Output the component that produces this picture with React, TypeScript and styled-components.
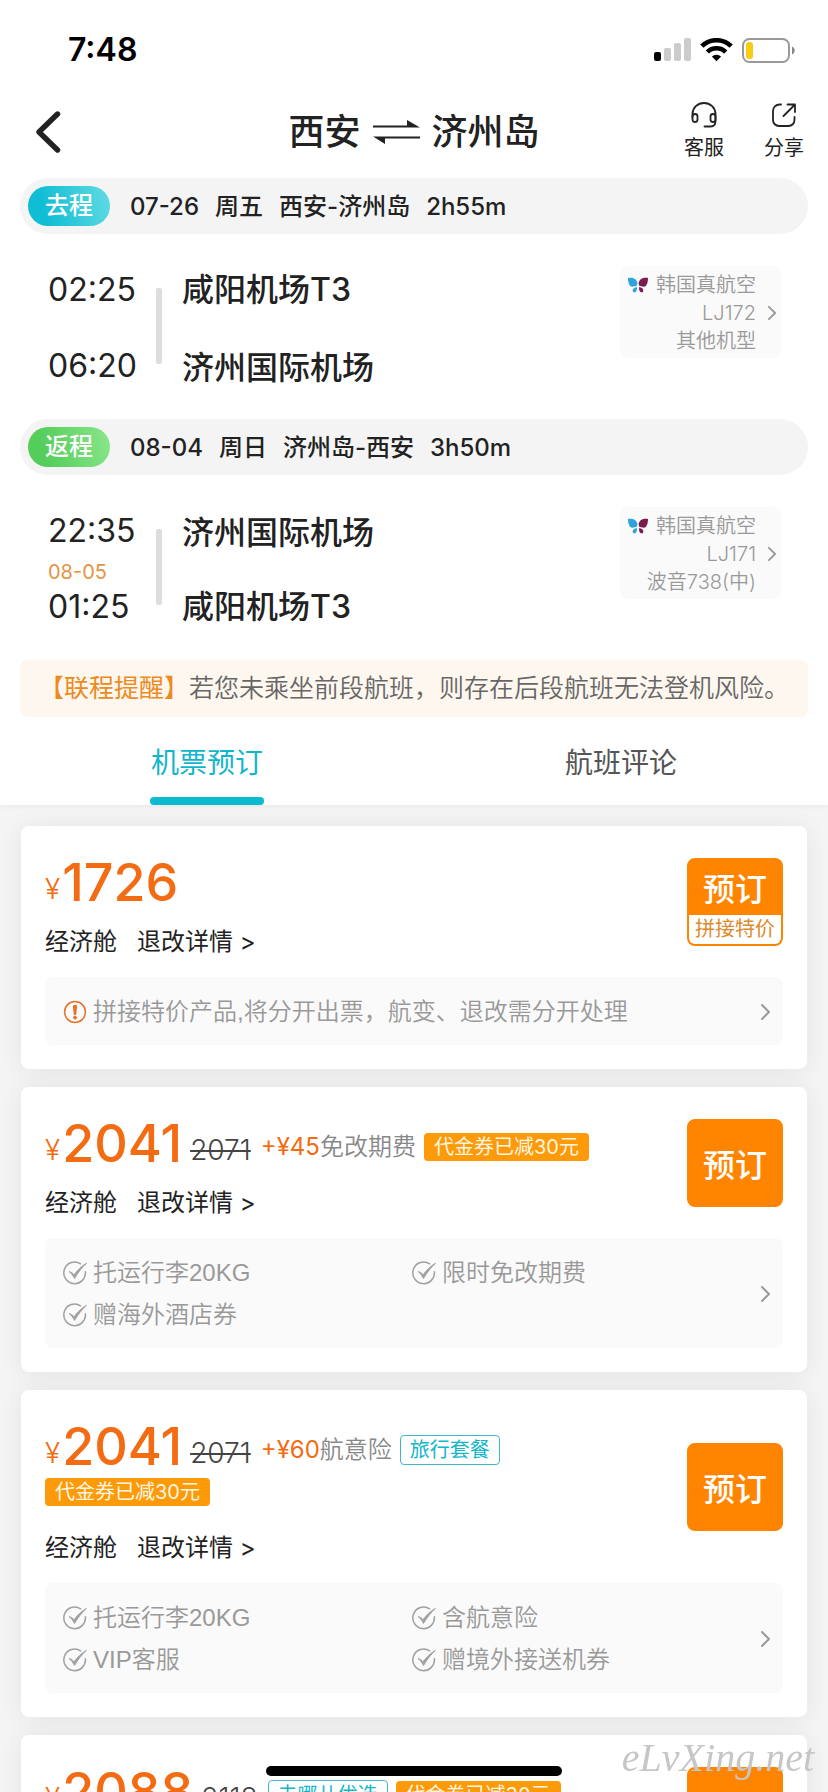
import React from "react";
import styled, { createGlobalStyle } from "styled-components";

const GlobalStyle = createGlobalStyle`
  *, *::before, *::after { box-sizing: border-box; }
  body { margin: 0; background: #f4f4f4; }
  body, button { font-family: Inter, "Noto Sans CJK SC", sans-serif; }
  button { margin: 0; padding: 0; border: 0; background: none; color: inherit; cursor: pointer; }
  a { color: inherit; text-decoration: none; }
  svg { display: block; flex: none; }
`;

const Screen = styled.div`
  height: 100vh;
  overflow: hidden;
  color: #222;
`;

const Top = styled.header`
  background: #fff;
  box-shadow: 0 1px 6px rgba(0, 0, 0, 0.05);
`;

const StatusBar = styled.div`
  display: flex;
  justify-content: space-between;
  align-items: center;
  height: 98px;
  padding: 2px 33px 0 68px;
  color: #000;
`;

const Clock = styled.time`
  font-size: 32px;
  font-weight: 600;
  line-height: 40px;
`;

const StatusIcons = styled.div`
  display: flex;
  align-items: center;
  gap: 9px;
`;

const NavBar = styled.nav`
  display: grid;
  grid-template-columns: 1fr auto 1fr;
  align-items: center;
  height: 68px;
  padding: 0 24px;
`;

const BackButton = styled.button`
  justify-self: start;
  padding-left: 12px;
`;

const Title = styled.h1`
  display: flex;
  align-items: center;
  gap: 12px;
  margin: 0;
  font-size: 36px;
  font-weight: 500;
  line-height: 48px;
`;

const NavActions = styled.div`
  display: flex;
  justify-self: end;
  gap: 40px;
`;

const NavAction = styled.button`
  display: flex;
  flex-direction: column;
  align-items: center;
  gap: 6px;
  font-size: 20px;
  line-height: 28px;
`;

const Itinerary = styled.div`
  padding: 12px 20px 0;
`;

const LegBar = styled.h2`
  display: flex;
  align-items: center;
  gap: 20px;
  height: 56px;
  margin: 0;
  padding: 0 8px;
  border-radius: 28px;
  background: #f4f4f4;
  font-size: 24px;
  font-weight: 500;
  line-height: 32px;
`;

const LegBadge = styled.span<{ $from: string; $to: string }>`
  width: 82px;
  height: 40px;
  border-radius: 20px;
  background: linear-gradient(75deg, ${(p) => p.$from} 20%, ${(p) => p.$to});
  color: #fff;
  line-height: 40px;
  text-align: center;
`;

const LegFacts = styled.span`
  display: flex;
  gap: 16px;
  padding-top: 2px;
`;

const LegBody = styled.section`
  display: flex;
  align-items: flex-start;
  height: 185px;
  padding: 32px 27px 0 28px;
`;

const Times = styled.div`
  display: flex;
  flex-direction: column;
  width: 108px;
  padding-top: 4px;
  font-size: 32px;
  line-height: 40px;
`;

const DayShift = styled.span`
  height: 36px;
  color: #e39443;
  font-size: 20px;
  line-height: 42px;
`;

const Rule = styled.div`
  width: 6px;
  height: 76px;
  margin: 22px 20px 0 0;
  border-radius: 2px;
  background: #ddd;
`;

const Airports = styled.div<{ $gap: number }>`
  display: flex;
  flex: 1;
  flex-direction: column;
  justify-content: center;
  gap: ${(p) => p.$gap}px;
  height: 126px;
  font-size: 32px;
  font-weight: 500;
  line-height: 44px;
`;

const FlightInfo = styled.button`
  display: flex;
  align-items: center;
  justify-content: flex-end;
  gap: 12px;
  width: 161px;
  padding: 5px 5px 3px;
  border-radius: 8px;
  background: #fafafa;
  color: #999;
  font-size: 20px;
  font-weight: 350;
  line-height: 28px;
`;

const FlightLines = styled.span`
  display: flex;
  flex-direction: column;
  align-items: flex-end;
`;

const Carrier = styled.span`
  display: flex;
  align-items: center;
  gap: 8px;
`;

const Notice = styled.p`
  margin: 0;
  border-radius: 8px;
  background: #fef7ef;
  color: #666;
  font-size: 25px;
  font-weight: 350;
  line-height: 57px;
  text-align: center;
  white-space: nowrap;
`;

const NoticeLabel = styled.strong`
  color: #ec8b1e;
  font-weight: 400;
`;

const Tabs = styled.div`
  display: grid;
  grid-template-columns: 1fr 1fr;
  justify-items: center;
  height: 88px;
`;

const Tab = styled.button<{ $active?: boolean }>`
  position: relative;
  padding-top: 10px;
  border-bottom: 6px solid transparent;
  color: ${(p) => (p.$active ? "#13b5cb" : "#555")};
  font-size: 28px;
  line-height: 72px;

  &::after {
    content: "";
    display: ${(p) => (p.$active ? "block" : "none")};
    position: absolute;
    right: -1px;
    bottom: -6px;
    left: -1px;
    height: 8px;
    border-radius: 4px;
    background: #0cbad0;
  }
`;

const Fares = styled.main`
  display: flex;
  flex-direction: column;
  gap: 18px;
  padding: 21px;
`;

const Card = styled.article`
  padding: 0 24px 24px;
  border-radius: 8px;
  background: #fff;
  box-shadow: 0 2px 24px rgba(0, 0, 0, 0.07);
`;

const CardHead = styled.div`
  display: flex;
  align-items: center;
  justify-content: space-between;
`;

const FareInfo = styled.div`
  padding: 24px 0 21px;
`;

const Offer = styled.div`
  display: flex;
  align-items: center;
  gap: 8px;
  height: 64px;
  padding-top: 8px;
`;

const PriceGroup = styled.div`
  display: flex;
  align-items: flex-end;
  height: 60px;
  margin-bottom: 6px;
`;

const Currency = styled.span`
  margin-right: 2px;
  color: #f36b12;
  font-size: 28px;
  font-weight: 300;
  line-height: 48px;
`;

const Price = styled.strong`
  color: #f36b12;
  font-size: 52px;
  font-weight: 500;
  line-height: 60px;
`;

const OldPrice = styled.s`
  margin: 0 2px 0 8px;
  color: #444;
  font-size: 28px;
  font-weight: 300;
  line-height: 48px;
`;

const AddOn = styled.span`
  color: #888;
  font-size: 24px;
  font-weight: 350;
  line-height: 32px;

  b {
    color: #f36b12;
    font-weight: 400;
  }
`;

const Coupon = styled.span`
  padding: 0 10px;
  border-radius: 4px;
  background: #fd9a0a;
  color: #fff6e0;
  font-size: 20px;
  line-height: 28px;
`;

const PlanTag = styled.span`
  padding: 0 9px;
  border: 1px solid #40b8c8;
  border-radius: 4px;
  color: #13b5cb;
  font-size: 20px;
  line-height: 28px;
`;

const CouponLine = styled.div`
  display: flex;
  align-items: flex-start;
  height: 42px;
`;

const Cabin = styled.div`
  display: flex;
  gap: 20px;
  margin-top: 14px;
  font-size: 24px;
  line-height: 28px;
`;

const BookButton = styled.button`
  display: flex;
  flex: none;
  flex-direction: column;
  width: 96px;
  height: 88px;
  overflow: hidden;
  border: 2px solid #ff8500;
  border-radius: 8px;
  background: #ff8500;
  color: #fff;
  font-size: 32px;
  font-weight: 500;
`;

const BookLabel = styled.span`
  display: flex;
  flex: 1;
  align-items: center;
  justify-content: center;
  width: 100%;
`;

const BookNote = styled.span`
  width: 100%;
  background: #fff;
  color: #dd8a2c;
  font-size: 20px;
  font-weight: 400;
  line-height: 29px;
`;

const Perks = styled.a`
  display: flex;
  align-items: center;
  padding: 14px 8px 12px 18px;
  border-radius: 8px;
  background: #fafafa;
  color: #999;
  font-family: "Liberation Sans", "Noto Sans CJK SC", sans-serif;
  font-size: 24px;
  font-weight: 350;
  line-height: 42px;
`;

const PerkGrid = styled.span<{ $single?: boolean }>`
  display: grid;
  flex: 1;
  grid-template-columns: ${(p) => (p.$single ? "1fr" : "1fr 1fr")};
`;

const Perk = styled.span`
  display: flex;
  align-items: center;
  gap: 6px;
`;

const HomeIndicator = styled.div`
  position: fixed;
  bottom: 16px;
  left: 50%;
  width: 296px;
  height: 10px;
  margin-left: -148px;
  border-radius: 5px;
  background: #000;
`;

const Watermark = styled.div`
  position: fixed;
  right: 14px;
  bottom: 10px;
  color: #c6c6c6;
  font-family: "Liberation Serif", serif;
  font-size: 40px;
  font-style: italic;
  line-height: 48px;
`;

const SignalIcon = () => (
  <svg width="37" height="24" viewBox="0 0 37 24">
    <rect x="0" y="14" width="7" height="9" rx="2" fill="#000" />
    <rect x="10" y="10" width="7" height="13" rx="2" fill="#ccc" />
    <rect x="20" y="5" width="7" height="18" rx="2" fill="#ccc" />
    <rect x="30" y="0" width="7" height="23" rx="2" fill="#ccc" />
  </svg>
);

const WifiIcon = () => (
  <svg width="33" height="24" viewBox="0 0 33 24">
    <g fill="none" stroke="#000" strokeWidth="4.6">
      <path d="M1.8 8.2a21 21 0 0 1 29.4 0" />
      <path d="M7.3 14a13 13 0 0 1 18.4 0" />
    </g>
    <path d="M16.5 23.2l-4.6-4.6a6.6 6.6 0 0 1 9.2 0z" fill="#000" />
  </svg>
);

const BatteryIcon = () => (
  <svg width="53" height="25" viewBox="0 0 53 25">
    <rect x="1" y="1" width="46" height="23" rx="6.5" fill="none" stroke="#999" strokeWidth="2" />
    <rect x="4" y="4" width="7" height="17" rx="3" fill="#f7cd13" />
    <path d="M50 8.5c3.6 1.6 3.6 6.4 0 8z" fill="#888" />
  </svg>
);

const BackIcon = () => (
  <svg width="26" height="42" viewBox="0 0 26 42" fill="none" stroke="#222" strokeWidth="5.4" strokeLinecap="round" strokeLinejoin="round">
    <path d="M21.5 3L3 21l18.5 18" />
  </svg>
);

const RoundTripIcon = () => (
  <svg width="47" height="28" viewBox="0 0 47 28" fill="#222">
    <path d="M0 7.5H34V2l13 7.5H0z" />
    <path d="M47 20.500H12V26L0 18.500h47z" />
  </svg>
);

const HeadsetIcon = () => (
  <svg width="26" height="26" viewBox="0 0 26 26" fill="none" stroke="#222" strokeWidth="1.8" strokeLinecap="round">
    <path d="M1.5 15v-3a11.5 11 0 0 1 23 0v7c0 3.500-2 5.500-5 5.500h-6" />
    <rect x="1.5" y="12" width="5" height="8" rx="2.5" />
    <rect x="19.5" y="12" width="5" height="8" rx="2.5" />
  </svg>
);

const ShareIcon = () => (
  <svg width="26" height="26" viewBox="0 0 26 26" fill="none" stroke="#222" strokeWidth="1.8" strokeLinecap="round" strokeLinejoin="round">
    <path d="M10 2.500H8.500a6.500 6.500 0 0 0-6.500 6.500v9a6 6 0 0 0 6 6h9.500a6 6 0 0 0 6-6v-3" />
    <path d="M16.500 2.500h7.500v7.500M23.500 3L12.500 14" />
  </svg>
);

const ButterflyLogo = () => (
  <svg width="20" height="16" viewBox="0 0 20 16">
    <path d="M0 1C4-.2 8.600 1.600 9.400 6L9 8.600C6.500 9.600 3.600 10.400 2 8.800 .5 6.500 0 4 0 1z" fill="#2fa3dc" />
    <path d="M8.800 10c.6 3-.6 5.400-2.800 5.400C4 15 3.800 10.800 8.800 10z" fill="#2fa3dc" />
    <path d="M20 1C16-.2 11.400 1.600 10.600 6L11 8.600c2.500 1 5.400 1.800 7 .2C19.500 6.500 20 4 20 1z" fill="#7a1c50" />
    <path d="M11.200 10c-.6 3 .6 5.400 2.800 5.400 2-.4 2.200-4.600-2.800-5.400z" fill="#7a1c50" />
  </svg>
);

const ChevronIcon = ({ size }: { size: number }) => (
  <svg width={size / 2} height={size} viewBox="0 0 9 18" fill="none" stroke="#999" strokeWidth="2" strokeLinecap="round" strokeLinejoin="round">
    <path d="M1 2l7 7-7 7" />
  </svg>
);

const ChevronSlot = styled.span`
  padding-right: 5px;
`;

const CheckIcon = () => (
  <svg width="24" height="24" viewBox="0 0 24 24" fill="none" stroke="#a0a0a0">
    <path d="M17.600 2.800a10.800 10.800 0 1 0 4.800 8" strokeWidth="1.5" strokeLinecap="round" />
    <path d="M6 10.500c2 .3 3.800 1.600 5 3.300C14 9.500 18.500 5 23.500 2.200 19.500 6.200 14.500 12 11.500 17.600 10 14.500 8 12 6 10.500z" fill="#a0a0a0" strokeWidth=".8" strokeLinejoin="round" />
  </svg>
);

const AlertIcon = () => (
  <svg width="24" height="24" viewBox="0 0 24 24">
    <circle cx="12" cy="12" r="10.4" fill="none" stroke="#e5742a" strokeWidth="1.5" />
    <path d="M12 4.800c1.500 0 2.300.8 2.100 2.200l-.9 7.200c-.2 1.300-2.200 1.300-2.400 0l-.9-7.200c-.2-1.400.6-2.200 2.100-2.200z" fill="#e5742a" />
    <circle cx="12" cy="17.600" r="1.9" fill="#e5742a" />
  </svg>
);

type Leg = {
  label: string;
  colors: [string, string];
  facts: string[];
  times: [string, string];
  dayShift?: string;
  airports: [string, string];
  flight: string;
  plane: string;
};

const legs: Leg[] = [
  {
    label: "去程",
    colors: ["#0fbdd4", "#62dbe4"],
    facts: ["07-26", "周五", "西安-济州岛", "2h55m"],
    times: ["02:25", "06:20"],
    airports: ["咸阳机场T3", "济州国际机场"],
    flight: "LJ172",
    plane: "其他机型",
  },
  {
    label: "返程",
    colors: ["#54cd5a", "#8ae68b"],
    facts: ["08-04", "周日", "济州岛-西安", "3h50m"],
    times: ["22:35", "01:25"],
    dayShift: "08-05",
    airports: ["济州国际机场", "咸阳机场T3"],
    flight: "LJ171",
    plane: "波音738(中)",
  },
];

type Fare = {
  price: number;
  oldPrice?: number;
  addOn?: [string, string];
  plan?: string;
  coupon?: string;
  couponBelow?: boolean;
  note?: string;
  alert?: string;
  perks?: string[];
};

const fares: Fare[] = [
  { price: 1726, note: "拼接特价", alert: "拼接特价产品,将分开出票，航变、退改需分开处理" },
  {
    price: 2041,
    oldPrice: 2071,
    addOn: ["+¥45", "免改期费"],
    coupon: "代金券已减30元",
    perks: ["托运行李20KG", "限时免改期费", "赠海外酒店券"],
  },
  {
    price: 2041,
    oldPrice: 2071,
    addOn: ["+¥60", "航意险"],
    plan: "旅行套餐",
    coupon: "代金券已减30元",
    couponBelow: true,
    perks: ["托运行李20KG", "含航意险", "VIP客服", "赠境外接送机券"],
  },
  { price: 2088, oldPrice: 2118, plan: "去哪儿优选", coupon: "代金券已减30元" },
];

const LegView = ({ leg }: { leg: Leg }) => (
  <>
    <LegBar>
      <LegBadge $from={leg.colors[0]} $to={leg.colors[1]}>{leg.label}</LegBadge>
      <LegFacts>
        {leg.facts.map((fact) => (
          <span key={fact}>{fact}</span>
        ))}
      </LegFacts>
    </LegBar>
    <LegBody>
      <Times>
        <time>{leg.times[0]}</time>
        <DayShift>{leg.dayShift}</DayShift>
        <time>{leg.times[1]}</time>
      </Times>
      <Rule />
      <Airports $gap={leg.dayShift ? 30 : 34}>
        <span>{leg.airports[0]}</span>
        <span>{leg.airports[1]}</span>
      </Airports>
      <FlightInfo type="button">
        <FlightLines>
          <Carrier>
            <ButterflyLogo />
            韩国真航空
          </Carrier>
          <span>{leg.flight}</span>
          <span>{leg.plane}</span>
        </FlightLines>
        <ChevronIcon size={16} />
      </FlightInfo>
    </LegBody>
  </>
);

const FareCard = ({ fare }: { fare: Fare }) => (
  <Card>
    <CardHead>
      <FareInfo>
        <Offer>
          <PriceGroup>
            <Currency>¥</Currency>
            <Price>{fare.price}</Price>
            {fare.oldPrice && <OldPrice>{fare.oldPrice}</OldPrice>}
          </PriceGroup>
          {fare.addOn && (
            <AddOn>
              <b>{fare.addOn[0]}</b>
              {fare.addOn[1]}
            </AddOn>
          )}
          {fare.plan && <PlanTag>{fare.plan}</PlanTag>}
          {fare.coupon && !fare.couponBelow && <Coupon>{fare.coupon}</Coupon>}
        </Offer>
        {fare.couponBelow && (
          <CouponLine>
            <Coupon>{fare.coupon}</Coupon>
          </CouponLine>
        )}
        <Cabin>
          <span>经济舱</span>
          <a href="#rules">退改详情 &gt;</a>
        </Cabin>
      </FareInfo>
      <BookButton type="button">
        <BookLabel>预订</BookLabel>
        {fare.note && <BookNote>{fare.note}</BookNote>}
      </BookButton>
    </CardHead>
    {(fare.alert || fare.perks) && (
      <Perks href="#detail">
        <PerkGrid $single={Boolean(fare.alert)}>
          {fare.alert && (
            <Perk>
              <AlertIcon />
              {fare.alert}
            </Perk>
          )}
          {fare.perks?.map((perk) => (
            <Perk key={perk}>
              <CheckIcon />
              {perk}
            </Perk>
          ))}
        </PerkGrid>
        <ChevronSlot>
          <ChevronIcon size={18} />
        </ChevronSlot>
      </Perks>
    )}
  </Card>
);

export default function App() {
  return (
    <Screen>
      <GlobalStyle />
      <Top>
        <StatusBar>
          <Clock>7:48</Clock>
          <StatusIcons>
            <SignalIcon />
            <WifiIcon />
            <BatteryIcon />
          </StatusIcons>
        </StatusBar>
        <NavBar>
          <BackButton type="button" aria-label="返回">
            <BackIcon />
          </BackButton>
          <Title>
            西安
            <RoundTripIcon />
            济州岛
          </Title>
          <NavActions>
            <NavAction type="button">
              <HeadsetIcon />
              客服
            </NavAction>
            <NavAction type="button">
              <ShareIcon />
              分享
            </NavAction>
          </NavActions>
        </NavBar>
        <Itinerary>
          {legs.map((leg) => (
            <LegView key={leg.label} leg={leg} />
          ))}
          <Notice>
            <NoticeLabel>【联程提醒】</NoticeLabel>
            若您未乘坐前段航班，则存在后段航班无法登机风险。
          </Notice>
        </Itinerary>
        <Tabs>
          <Tab type="button" $active>机票预订</Tab>
          <Tab type="button">航班评论</Tab>
        </Tabs>
      </Top>
      <Fares>
        {fares.map((fare, index) => (
          <FareCard key={index} fare={fare} />
        ))}
      </Fares>
      <HomeIndicator />
      <Watermark>eLvXing.net</Watermark>
    </Screen>
  );
}
